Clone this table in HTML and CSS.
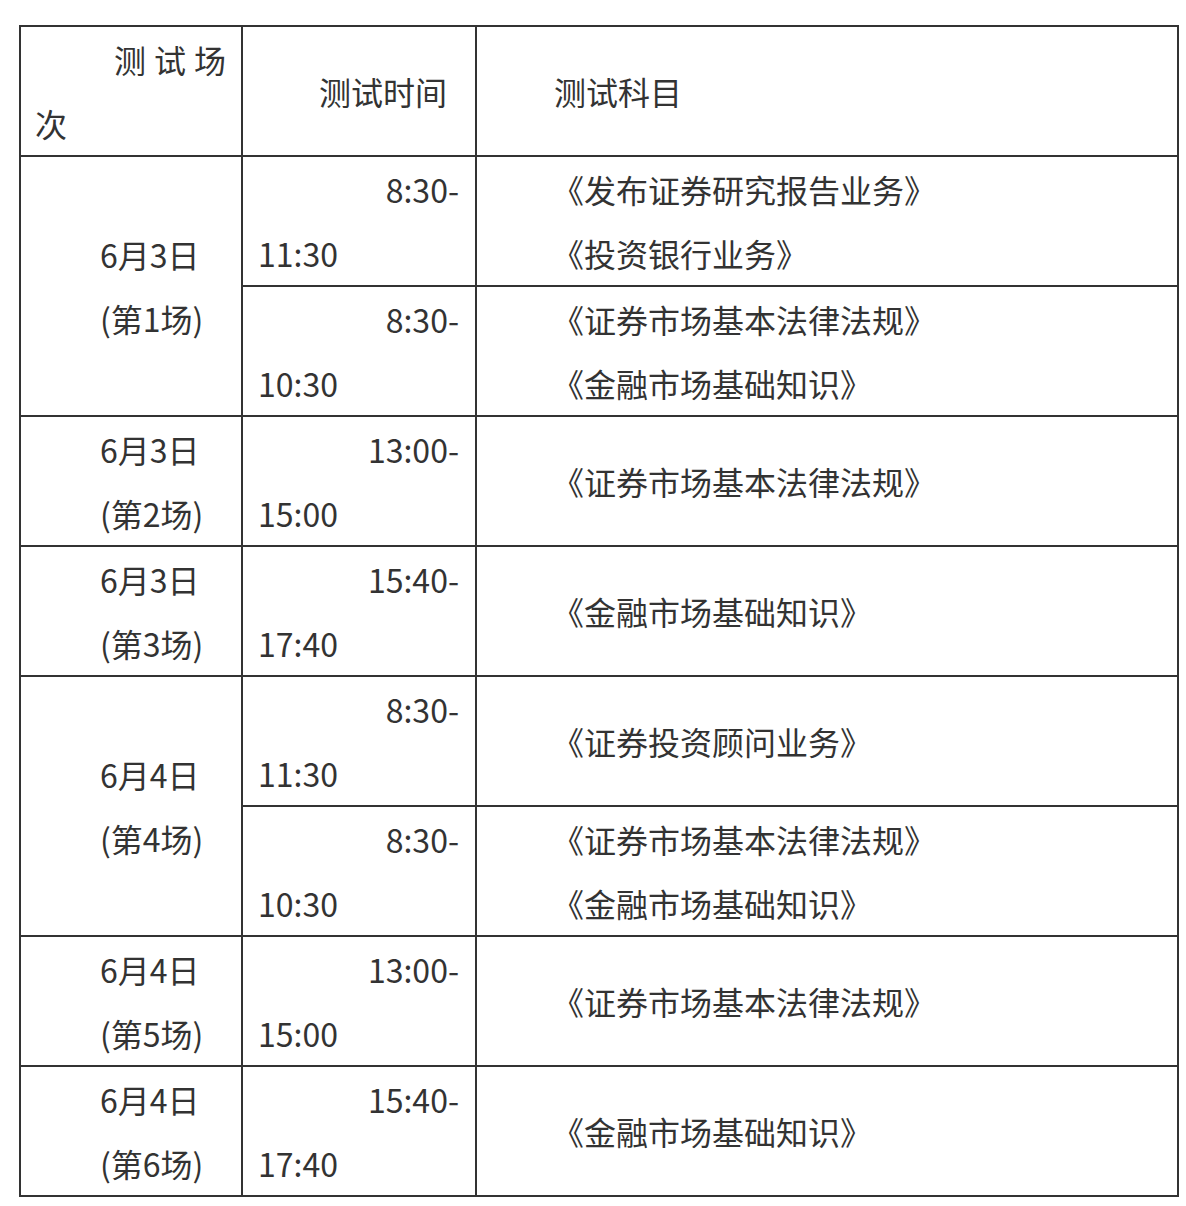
FILE: index.html
```html
<!DOCTYPE html>
<html lang="zh-CN">
<head>
<meta charset="utf-8">
<title>测试安排</title>
<link rel="stylesheet" href="styles.css">
</head>
<body>
<table class="sched">
  <colgroup>
    <col class="c1">
    <col class="c2">
    <col class="c3">
  </colgroup>
  <tr>
    <td class="h1"><span class="l r"><span class="spaced">测试场</span></span><span class="l">次</span></td>
    <td class="h2">测试时间</td>
    <td class="h3">测试科目</td>
  </tr>
  <tr>
    <td class="day" rowspan="2"><span class="l">6月3日</span><span class="l">(第1场)</span></td>
    <td class="time"><span class="l r">8:30-</span><span class="l">11:30</span></td>
    <td class="subj"><span class="l">《发布证券研究报告业务》</span><span class="l">《投资银行业务》</span></td>
  </tr>
  <tr>
    <td class="time"><span class="l r">8:30-</span><span class="l">10:30</span></td>
    <td class="subj"><span class="l">《证券市场基本法律法规》</span><span class="l">《金融市场基础知识》</span></td>
  </tr>
  <tr>
    <td class="day"><span class="l">6月3日</span><span class="l">(第2场)</span></td>
    <td class="time"><span class="l r">13:00-</span><span class="l">15:00</span></td>
    <td class="subj"><span class="l">《证券市场基本法律法规》</span></td>
  </tr>
  <tr>
    <td class="day"><span class="l">6月3日</span><span class="l">(第3场)</span></td>
    <td class="time"><span class="l r">15:40-</span><span class="l">17:40</span></td>
    <td class="subj"><span class="l">《金融市场基础知识》</span></td>
  </tr>
  <tr>
    <td class="day" rowspan="2"><span class="l">6月4日</span><span class="l">(第4场)</span></td>
    <td class="time"><span class="l r">8:30-</span><span class="l">11:30</span></td>
    <td class="subj"><span class="l">《证券投资顾问业务》</span></td>
  </tr>
  <tr>
    <td class="time"><span class="l r">8:30-</span><span class="l">10:30</span></td>
    <td class="subj"><span class="l">《证券市场基本法律法规》</span><span class="l">《金融市场基础知识》</span></td>
  </tr>
  <tr>
    <td class="day"><span class="l">6月4日</span><span class="l">(第5场)</span></td>
    <td class="time"><span class="l r">13:00-</span><span class="l">15:00</span></td>
    <td class="subj"><span class="l">《证券市场基本法律法规》</span></td>
  </tr>
  <tr>
    <td class="day"><span class="l">6月4日</span><span class="l">(第6场)</span></td>
    <td class="time"><span class="l r">15:40-</span><span class="l">17:40</span></td>
    <td class="subj"><span class="l">《金融市场基础知识》</span></td>
  </tr>
</table>
</body>
</html>
```

FILE: styles.css
```css
html, body {
  margin: 0;
  padding: 0;
  background: #fff;
}

body {
  font-family: "Noto Sans CJK SC", "Noto Sans", sans-serif;
  font-size: 32px;
  color: #333;
}

.sched {
  margin: 25px 0 0 19px;
  border-collapse: collapse;
  table-layout: fixed;
  width: 1158px;
}

.c1 { width: 222px; }
.c2 { width: 234px; }
.c3 { width: 702px; }

.sched td {
  border: 2px solid #333;
  padding: 0;
  line-height: 64px;
  height: 128px;
  vertical-align: middle;
  white-space: nowrap;
}

.l {
  display: block;
}

.r {
  text-align: right;
}

.h1 {
  padding: 0 15px 0 14px !important;
}

.spaced {
  letter-spacing: 8px;
  margin-right: -8px;
}

.h2 {
  padding-left: 76px !important;
}

.h3 {
  padding-left: 77px !important;
}

.day {
  padding-left: 79px !important;
}

.time {
  padding: 0 16px 0 15px !important;
}

.subj {
  padding-left: 75px !important;
}
```
